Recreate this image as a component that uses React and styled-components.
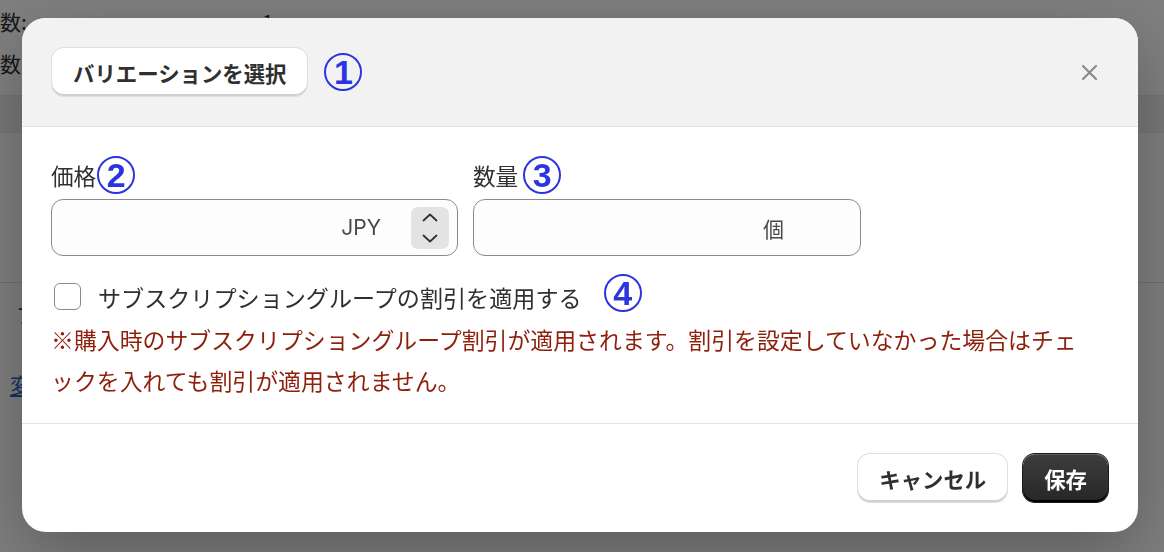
import React from "react";
import styled, { createGlobalStyle } from "styled-components";

const GlobalStyle = createGlobalStyle`
  html, body { margin: 0; padding: 0; }
  body {
    width: 1164px;
    height: 552px;
    overflow: hidden;
    background: #ffffff;
    font-family: "Noto Sans CJK JP", "Noto Sans", sans-serif;
    color: #303030;
  }
  * { box-sizing: border-box; }
`;

/* ---------- background page ---------- */
const Page = styled.div`
  width: 1164px;
  height: 552px;
  display: flex;
  flex-direction: column;
  background: #ffffff;
`;

const InfoList = styled.div`
  display: flex;
  flex-direction: column;
  height: 95px;
`;

const InfoRow = styled.div`
  display: flex;
  align-items: center;
  height: 42px;
  font-size: 21px;
  color: #303030;
`;

const InfoLabel = styled.span`
  width: 262px;
  padding-left: 0;
`;

const Band = styled.div`
  height: 38px;
  background: #f0f0f0;
  border-top: 1px solid #e6e6e6;
`;

const Section = styled.div`
  height: 149px;
`;

const Card = styled.div`
  border-top: 1px solid #dcdcdc;
  display: flex;
  flex-direction: column;
  gap: 40px;
  padding: 16px 0 0 16px;
  font-size: 21px;
`;

const BgLink = styled.a`
  color: #2c5fc4;
  text-decoration: underline;
  margin-left: -6px;
`;

/* ---------- modal ---------- */
const Overlay = styled.div`
  position: fixed;
  inset: 0;
  background: rgba(0, 0, 0, 0.5);
  display: flex;
  align-items: flex-start;
  padding: 18px 0 0 22px;
`;

const Modal = styled.div`
  width: 1116px;
  background: #ffffff;
  border-radius: 24px;
  overflow: hidden;
  display: flex;
  flex-direction: column;
  box-shadow: 0 24px 70px rgba(0, 0, 0, 0.28);
`;

const Header = styled.div`
  height: 109px;
  background: #f2f2f2;
  border-bottom: 1px solid #e3e3e3;
  display: flex;
  align-items: center;
  padding: 0 39px 0 30px;
`;

const HeaderLeft = styled.div`
  flex: 1;
  display: flex;
  align-items: center;
  gap: 17px;
`;

const Button = styled.button`
  height: 48px;
  padding: 0 21px;
  border: none;
  border-radius: 12px;
  font-family: "Noto Sans CJK JP", sans-serif;
  font-size: 21.4px;
  font-weight: 700;
  cursor: pointer;
  display: inline-flex;
  align-items: center;
  justify-content: center;
  background: ${(p) => (p.$primary ? "linear-gradient(#3d3d3d, #272727)" : "#ffffff")};
  color: ${(p) => (p.$primary ? "#ffffff" : "#303030")};
  box-shadow: ${(p) =>
    p.$primary
      ? "inset 0 -2px 0 #000000, inset 0 1px 0 rgba(255,255,255,0.18), 0 0 0 1px #1a1a1a"
      : "inset 0 -2px 0 #cfcfcf, 0 0 0 1px #dedede"};
`;

const Circled = styled.span`
  width: 38px;
  height: 38px;
  flex: none;
  border-radius: 50%;
  border: 2.5px solid #2c34e0;
  color: #2c34e0;
  display: inline-flex;
  align-items: center;
  justify-content: center;
  font-family: "Liberation Sans", Arial, sans-serif;
  font-weight: 700;
  font-size: 34px;
  line-height: 1;
  margin-left: ${(p) => p.$gap || 0}px;
  align-self: ${(p) => (p.$top ? "flex-start" : "auto")};
`;

const CloseButton = styled.button`
  width: 20px;
  height: 20px;
  padding: 0;
  border: none;
  background: transparent;
  display: flex;
  align-items: center;
  justify-content: center;
  cursor: pointer;
`;

const Body = styled.div`
  padding: 29px 29px 22px 29px;
  border-bottom: 1px solid #e3e3e3;
  display: flex;
  flex-direction: column;
`;

const Fields = styled.div`
  display: flex;
  gap: 15px;
`;

const Field = styled.div`
  width: ${(p) => p.$w}px;
  display: flex;
  flex-direction: column;
  gap: 5px;
`;

const LabelRow = styled.div`
  height: 38px;
  display: flex;
  align-items: center;
  font-size: 22.6px;
  color: #303030;
`;

const InputBox = styled.div`
  height: 57px;
  border: 1px solid #8a8a8a;
  border-radius: 12px;
  background: #fdfdfd;
  display: flex;
  align-items: center;
  justify-content: flex-end;
  padding-right: 8px;
  gap: 30px;
`;

const Suffix = styled.span`
  font-family: "Inter", "Noto Sans CJK JP", sans-serif;
  font-size: 21px;
  color: #4a4a4a;
`;

const Spinner = styled.div`
  width: 38px;
  height: 42px;
  border-radius: 7px;
  background: ${(p) => (p.$hidden ? "transparent" : "#e3e3e3")};
  display: flex;
  flex-direction: column;
  align-items: center;
  justify-content: center;
  gap: 12px;
`;

const CheckRow = styled.div`
  margin-top: 18px;
  height: 45px;
  display: flex;
  align-items: center;
  padding-left: 3px;
`;

const Checkbox = styled.span`
  width: 27px;
  height: 27px;
  border: 1.5px solid #8a8a8a;
  border-radius: 6px;
  background: #ffffff;
  flex: none;
`;

const CheckLabel = styled.span`
  margin-left: 17px;
  font-size: 23.1px;
  color: #303030;
`;

const Note = styled.p`
  margin: 0;
  max-width: 1045px;
  font-size: 22.9px;
  line-height: 41px;
  color: #8e1f0b;
`;

const Footer = styled.div`
  height: 108px;
  display: flex;
  align-items: center;
  justify-content: flex-end;
  gap: 16px;
  padding-right: 30px;
`;

const Chevron = ({ down }) => (
  <svg width="16" height="9" viewBox="0 0 16 9" fill="none">
    <path
      d={down ? "M1.5 1.5 L8 7.5 L14.5 1.5" : "M1.5 7.5 L8 1.5 L14.5 7.5"}
      stroke="#303030"
      strokeWidth="1.8"
      strokeLinecap="round"
      strokeLinejoin="round"
    />
  </svg>
);

export default function App() {
  return (
    <>
      <GlobalStyle />
      <Page>
        <InfoList>
          <InfoRow>
            <InfoLabel>数:</InfoLabel>
            <span>1</span>
          </InfoRow>
          <InfoRow>
            <InfoLabel>数:</InfoLabel>
          </InfoRow>
        </InfoList>
        <Band />
        <Section />
        <Card>
          <span>フ</span>
          <BgLink>変</BgLink>
        </Card>
      </Page>
      <Overlay>
        <Modal>
          <Header>
            <HeaderLeft>
              <Button>バリエーションを選択</Button>
              <Circled>1</Circled>
            </HeaderLeft>
            <CloseButton aria-label="閉じる">
              <svg width="17" height="17" viewBox="0 0 17 17">
                <path d="M2 2 L15 15 M15 2 L2 15" stroke="#8a8a8a" strokeWidth="2.2" strokeLinecap="round" />
              </svg>
            </CloseButton>
          </Header>
          <Body>
            <Fields>
              <Field $w={407}>
                <LabelRow>
                  価格<Circled $gap={1}>2</Circled>
                </LabelRow>
                <InputBox>
                  <Suffix>JPY</Suffix>
                  <Spinner>
                    <Chevron />
                    <Chevron down />
                  </Spinner>
                </InputBox>
              </Field>
              <Field $w={388}>
                <LabelRow>
                  数量<Circled $gap={5}>3</Circled>
                </LabelRow>
                <InputBox>
                  <Suffix>個</Suffix>
                  <Spinner $hidden />
                </InputBox>
              </Field>
            </Fields>
            <CheckRow>
              <Checkbox />
              <CheckLabel>サブスクリプショングループの割引を適用する</CheckLabel>
              <Circled $gap={22} $top>4</Circled>
            </CheckRow>
            <Note>
              ※購入時のサブスクリプショングループ割引が適用されます。割引を設定していなかった場合はチェックを入れても割引が適用されません。
            </Note>
          </Body>
          <Footer>
            <Button>キャンセル</Button>
            <Button $primary>保存</Button>
          </Footer>
        </Modal>
      </Overlay>
    </>
  );
}
